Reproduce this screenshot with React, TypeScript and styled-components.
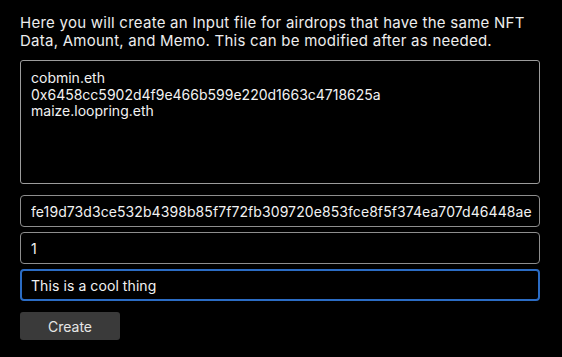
import React from "react";
import styled, { createGlobalStyle } from "styled-components";

const font = `Inter, Roboto, "Liberation Sans", sans-serif`;

const GlobalStyle = createGlobalStyle`
  html, body {
    margin: 0;
    padding: 0;
    background: #000;
  }
  body {
    font-family: ${font};
  }
`;

const Page = styled.div`
  width: 562px;
  height: 357px;
  box-sizing: border-box;
  padding: 14px 22px 0 20px;
  background: #000;
  color: #ececec;
  display: flex;
  flex-direction: column;
`;

const Intro = styled.p`
  margin: 0 0 10px;
  font-size: 15px;
  letter-spacing: 0.25px;
  line-height: 18px;
  color: #ededed;
`;

const AddressBox = styled.textarea`
  box-sizing: border-box;
  width: 520px;
  height: 124px;
  margin: 0 0 11px;
  padding: 9px 10px;
  background: #000;
  color: #f2f2f2;
  border: 1px solid #9c9c9c;
  border-radius: 3px;
  font-family: ${font};
  font-size: 14px;
  line-height: 16.5px;
  resize: none;
  outline: none;
`;

const Fields = styled.div`
  display: flex;
  flex-direction: column;
  gap: 5px;
`;

const Field = styled.input<{ $active?: boolean }>`
  box-sizing: border-box;
  width: 520px;
  height: 32px;
  padding: 0 5px 0 ${({ $active }) => ($active ? "9px" : "10px")};
  background: #000;
  color: #f2f2f2;
  border: ${({ $active }) => ($active ? "2px solid #2b6cc4" : "1px solid #8e8e8e")};
  border-radius: 4px;
  font-family: ${font};
  font-size: 14px;
  letter-spacing: 0.08px;
  outline: none;
`;

const CreateButton = styled.button`
  margin-top: 11px;
  width: 100px;
  height: 28px;
  background: #3a3a3a;
  color: #e6e6e6;
  border: none;
  border-radius: 3px;
  font-family: ${font};
  font-size: 14px;
  cursor: pointer;
`;

const addresses = [
  "cobmin.eth",
  "0x6458cc5902d4f9e466b599e220d1663c4718625a",
  "maize.loopring.eth",
].join("\n");

const App: React.FC = () => (
  <>
    <GlobalStyle />
    <Page>
      <Intro>
        Here you will create an Input file for airdrops that have the same NFT
        Data, Amount, and Memo. This can be modified after as needed.
      </Intro>
      <AddressBox defaultValue={addresses} />
      <Fields>
        <Field defaultValue="fe19d73d3ce532b4398b85f7f72fb309720e853fce8f5f374ea707d46448ae" />
        <Field defaultValue="1" />
        <Field $active defaultValue="This is a cool thing" />
      </Fields>
      <div>
        <CreateButton>Create</CreateButton>
      </div>
    </Page>
  </>
);

export default App;
